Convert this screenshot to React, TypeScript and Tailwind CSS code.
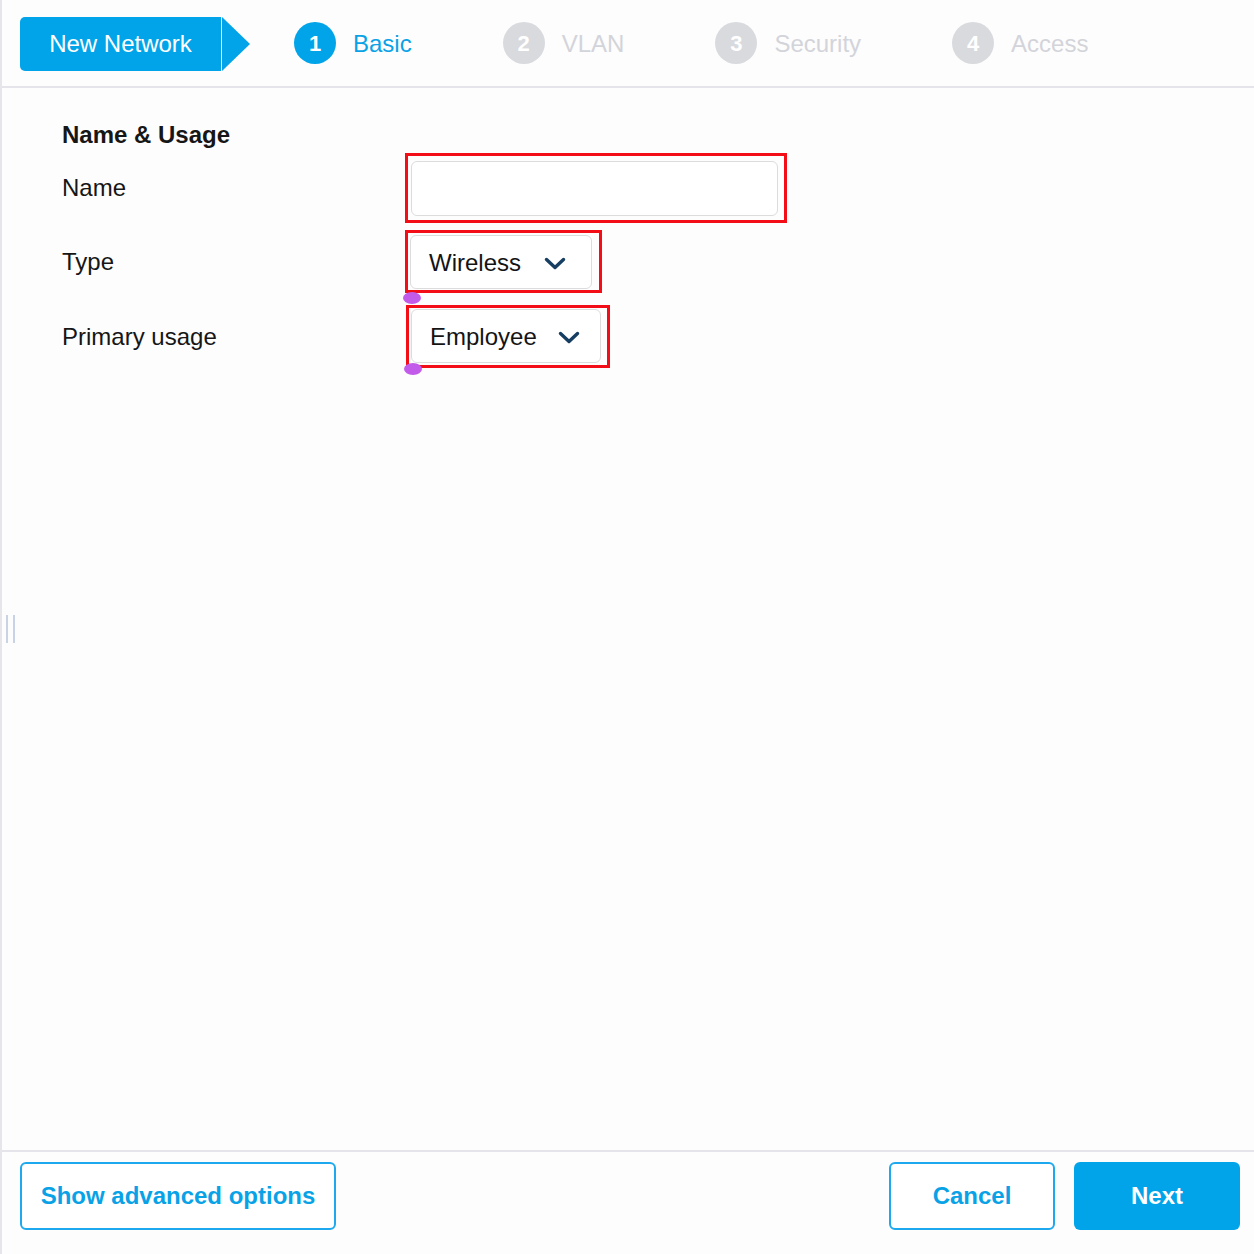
import React from "react";

const steps = [
  { n: 1, label: "Basic", active: true },
  { n: 2, label: "VLAN", active: false },
  { n: 3, label: "Security", active: false },
  { n: 4, label: "Access", active: false },
];

function Chevron() {
  return (
    <svg width="22" height="13" viewBox="0 0 22 13" fill="none">
      <path d="M2.5 2.5 L11 10.5 L19.5 2.5" stroke="#163e63" strokeWidth="3.4" strokeLinecap="round" strokeLinejoin="round" />
    </svg>
  );
}

function Marker({ className }: { className: string }) {
  return (
    <span
      className={`absolute left-[-5px] w-[18px] h-[12px] rounded-[50%] bg-[#c25aea] ${className}`}
    />
  );
}

export default function App() {
  return (
    <div className="relative w-[1254px] h-[1254px] bg-[#fdfdfd] flex flex-col border-l-2 border-[#e6e6ea] font-['Liberation_Sans',Arial,sans-serif]">
      {/* wizard header */}
      <header className="h-[88px] shrink-0 flex items-center pl-[18px] pt-[2px] border-b-2 border-[#e4e4ea]">
        <div className="flex items-center">
          <div className="w-[201px] h-[54px] bg-[#02a4e9] rounded-l-[5px] flex items-center justify-center text-white text-[24px]">
            New Network
          </div>
          <svg width="28" height="54" viewBox="0 0 28 54" className="ml-[1px]">
            <polygon points="0,0 28,27 0,54" fill="#02a4e9" />
          </svg>
        </div>
        <div className="flex items-center gap-[91px] ml-[44px]">
          {steps.map((s) => (
            <div key={s.n} className="flex items-center gap-[17px]">
              <div
                className={`w-[42px] h-[42px] mt-[-2px] rounded-full flex items-center justify-center text-white text-[22px] font-bold ${
                  s.active ? "bg-[#02a4e9]" : "bg-[#d9dade]"
                }`}
              >
                {s.n}
              </div>
              <span className={`text-[24px] ${s.active ? "text-[#0aa2e6]" : "text-[#d3d4da]"}`}>
                {s.label}
              </span>
            </div>
          ))}
        </div>
      </header>

      {/* form body */}
      <main className="flex-1 pl-[60px] text-[#161616]">
        <h2 className="mt-[33px] text-[24px] font-bold leading-[28px]">Name &amp; Usage</h2>

        <div className="mt-[4px] flex items-center">
          <span className="w-[343px] text-[24px]">Name</span>
          <div className="border-[3px] border-[#f20d17] pl-[3px] pt-[5px] pr-[6px] pb-[4px]">
            <input
              className="block w-[367px] h-[55px] bg-white border-[1.5px] border-[#dcdcdc] rounded-[6px] outline-none"
              type="text"
            />
          </div>
        </div>

        <div className="mt-[7px] flex items-center">
          <span className="w-[343px] text-[24px]">Type</span>
          <div className="relative border-[3px] border-[#f20d17] pl-[2px] pt-[2px] pr-[7px] pb-[1px]">
            <div className="w-[182px] h-[54px] bg-white border-[1.5px] border-[#dcdcdc] rounded-[6px] flex items-center pl-[18px] pt-[2px] gap-[23px] text-[24px] text-[#141414]">
              <span>Wireless</span>
              <Chevron />
            </div>
            <Marker className="bottom-[-14px]" />
          </div>
        </div>

        <div className="mt-[12px] flex items-center">
          <span className="w-[344px] text-[24px]">Primary usage</span>
          <div className="relative border-[3px] border-[#f20d17] pl-[2px] pt-[1px] pr-[6px] pb-[2px]">
            <div className="w-[190px] h-[54px] bg-white border-[1.5px] border-[#dcdcdc] rounded-[6px] flex items-center pl-[18px] pt-[2px] gap-[21px] text-[24px] text-[#141414]">
              <span>Employee</span>
              <Chevron />
            </div>
            <Marker className="bottom-[-10px]" />
          </div>
        </div>
      </main>

      {/* footer actions */}
      <footer className="h-[104px] shrink-0 border-t-2 border-[#e4e4ea] flex items-start pt-[10px] pl-[18px] pr-[14px]">
        <button className="w-[316px] h-[68px] border-2 border-[#1ea8ee] rounded-[6px] bg-white text-[#0aa2e6] text-[24px] font-bold">
          Show advanced options
        </button>
        <div className="ml-auto flex gap-[19px]">
          <button className="w-[166px] h-[68px] border-2 border-[#1ea8ee] rounded-[6px] bg-white text-[#0aa2e6] text-[24px] font-bold">
            Cancel
          </button>
          <button className="w-[166px] h-[68px] rounded-[6px] bg-[#02a4e9] text-white text-[24px] font-bold">
            Next
          </button>
        </div>
      </footer>

      {/* splitter grip */}
      <div className="absolute left-[4px] top-[615px] flex gap-[5px]">
        <span className="w-[2px] h-[28px] bg-[#c9d3e6]" />
        <span className="w-[2px] h-[28px] bg-[#c9d3e6]" />
      </div>
    </div>
  );
}
